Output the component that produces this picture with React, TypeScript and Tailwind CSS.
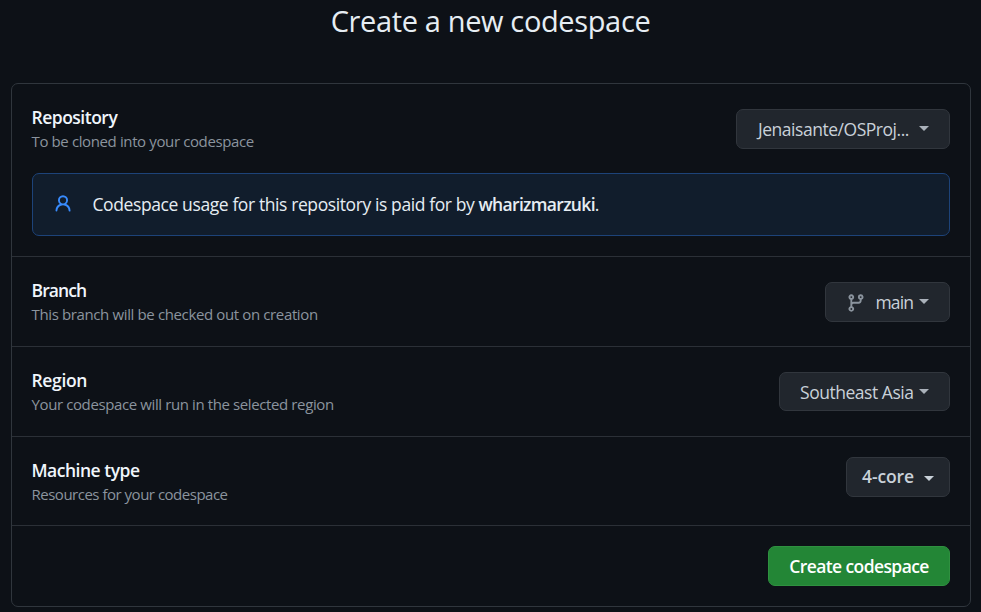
import type { ReactNode } from "react";

const buttonBase =
  "flex shrink-0 items-center whitespace-nowrap rounded-[7px] border border-[#31363d] bg-[#21262d] text-[#c9d1d9]";

function Caret({ className }: { className: string }) {
  return (
    <svg viewBox="0 0 10 5" className={`h-[5px] w-[10px] shrink-0 fill-current ${className}`} aria-hidden="true">
      <path d="M0 0h10L5 5z" />
    </svg>
  );
}

function PersonIcon() {
  return (
    <svg viewBox="0 0 16 16" className="-mt-0.5 size-5 shrink-0 fill-[#388bfd]" aria-hidden="true">
      <path d="M10.561 8.073a6.005 6.005 0 0 1 3.432 5.142.75.75 0 1 1-1.498.07 4.5 4.5 0 0 0-8.99 0 .75.75 0 0 1-1.498-.07 6.004 6.004 0 0 1 3.431-5.142 3.999 3.999 0 1 1 5.123 0ZM10.5 5a2.5 2.5 0 1 0-5 0 2.5 2.5 0 0 0 5 0Z" />
    </svg>
  );
}

function BranchIcon() {
  return (
    <svg viewBox="0 0 16 16" className="mt-0.5 size-5 shrink-0 fill-[#8b949e]" aria-hidden="true">
      <path d="M9.5 3.25a2.25 2.25 0 1 1 3 2.122V6A2.5 2.5 0 0 1 10 8.5H6a1 1 0 0 0-1 1v1.128a2.251 2.251 0 1 1-1.5 0V5.372a2.25 2.25 0 1 1 1.5 0v1.836A2.493 2.493 0 0 1 6 7h4a1 1 0 0 0 1-1v-.628A2.25 2.25 0 0 1 9.5 3.25Zm-6 0a.75.75 0 1 0 1.5 0 .75.75 0 0 0-1.5 0Zm8.25-.75a.75.75 0 1 0 0 1.5.75.75 0 0 0 0-1.5ZM4.25 12a.75.75 0 1 0 0 1.5.75.75 0 0 0 0-1.5Z" />
    </svg>
  );
}

function Label({ title, titleClass, note, noteClass }: { title: string; titleClass: string; note: string; noteClass: string }) {
  return (
    <div className="-ml-[0.5px] -mt-px whitespace-nowrap">
      <h2 className={`text-[17.5px] font-semibold leading-[26px] text-[#f0f6fc] ${titleClass}`}>{title}</h2>
      <p className={`text-[15px] leading-[22px] text-[#8b949e] ${noteClass}`}>{note}</p>
    </div>
  );
}

function Row({ className, children }: { className: string; children: ReactNode }) {
  return <div className={`flex items-start justify-between border-b border-[#2b3037] px-5 ${className}`}>{children}</div>;
}

export default function App() {
  return (
    <main className="h-[612px] w-[981px] overflow-hidden bg-[#0d1117] pl-[11px] font-['Open_Sans',sans-serif]">
      <h1 className="h-[83px] w-[959px] whitespace-nowrap text-center text-[29px] leading-[42px] tracking-[-0.36px] text-[#e6edf3]">
        Create a new codespace
      </h1>
      <section className="h-[524px] w-[960px] rounded-[7px] border border-[#30363d]">
        <div className="h-[173px] border-b border-[#2b3037] px-5">
          <div className="flex h-[89px] items-start justify-between pt-[21px]">
            <Label title="Repository" titleClass="tracking-[-0.5px]" note="To be cloned into your codespace" noteClass="tracking-[-0.38px]" />
            <button className={`${buttonBase} mt-1 h-10 w-[214px] pl-5 text-[17.5px] tracking-[-0.47px]`}>
              <span className="w-[162px] pl-px text-left">Jenaisante/OSProj...</span>
              <Caret className="-mt-px text-[#aab1ba]" />
            </button>
          </div>
          <div className="flex h-[63px] items-center rounded-[7px] border border-[#1d4379] bg-[#111d2c] pl-5 text-[#e6edf3]">
            <PersonIcon />
            <p className="ml-[19.5px] whitespace-nowrap text-[17.5px] tracking-[-0.4px]">
              Codespace usage for this repository is paid for by{" "}
              <strong className="font-semibold tracking-[-0.68px]">wharizmarzuki</strong>.
            </p>
          </div>
        </div>
        <Row className="h-[90px] pt-[21px]">
          <Label title="Branch" titleClass="tracking-[-0.9px]" note="This branch will be checked out on creation" noteClass="tracking-[-0.37px]" />
          <button className={`${buttonBase} mt-1 h-10 w-[125px] pl-5 text-[17.5px] tracking-[-0.9px]`}>
            <BranchIcon />
            <span className="ml-[9.5px] w-[43.5px] text-left">main</span>
            <Caret className="-mt-px text-[#aab1ba]" />
          </button>
        </Row>
        <Row className="h-[90px] pt-[21px]">
          <Label title="Region" titleClass="tracking-[-0.33px]" note="Your codespace will run in the selected region" noteClass="tracking-[-0.39px]" />
          <button className={`${buttonBase} mt-1 h-[39px] w-[171px] pl-5 text-[17.5px] tracking-[-0.47px]`}>
            <span className="w-[119px] pt-0.5 text-left">Southeast Asia</span>
            <Caret className="-mt-px text-[#aab1ba]" />
          </button>
        </Row>
        <Row className="h-[89px] pt-5">
          <div className="pt-px">
            <Label title="Machine type" titleClass="tracking-[-0.5px]" note="Resources for your codespace" noteClass="tracking-[-0.49px]" />
          </div>
          <button className={`${buttonBase} h-10 w-[104px] pl-[15px] text-[17.5px] font-semibold tracking-[-0.13px]`}>
            <span className="w-[62px] pb-0.5 text-left">4-core</span>
            <Caret className="mt-0.5" />
          </button>
        </Row>
        <div className="flex justify-end px-5 pt-5">
          <button className="h-10 w-[182px] whitespace-nowrap rounded-[7px] border border-[#2f9140] bg-[#238636] text-[17.5px] font-semibold tracking-[-0.6px] text-white">
            Create codespace
          </button>
        </div>
      </section>
    </main>
  );
}
